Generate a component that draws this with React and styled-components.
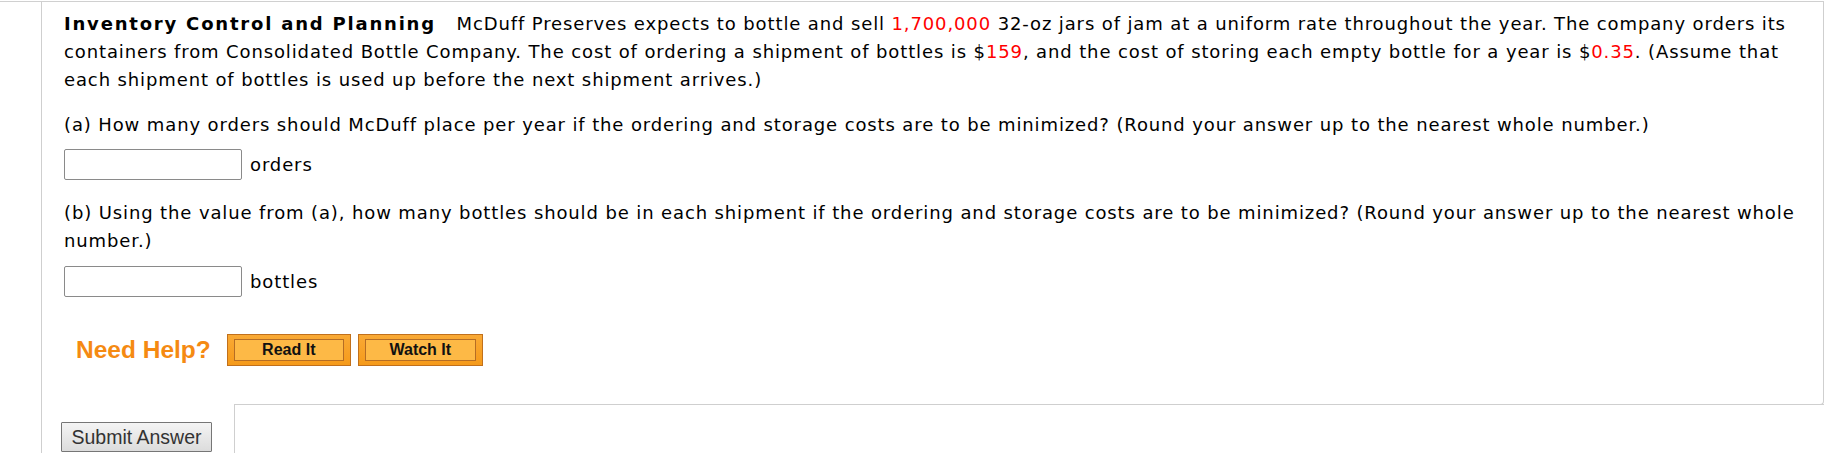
import React from "react";
import styled, { createGlobalStyle } from "styled-components";

const GlobalStyle = createGlobalStyle`
  html, body {
    margin: 0;
    padding: 0;
    background: #fff;
  }
  body {
    font-family: "DejaVu Sans", Verdana, sans-serif;
    color: #000;
  }
`;

const Page = styled.div`
  width: 1824px;
  margin-top: 1px;
  border-top: 1px solid #d0d0d0;
  height: 451px;
  overflow: hidden;
`;

const Column = styled.div`
  margin-left: 41px;
  border-left: 1px solid #cfcfcf;
  height: 100%;
  display: flex;
  flex-direction: column;
`;

const Question = styled.div`
  border-right: 1px solid #cfcfcf;
  border-bottom: 1px solid #cfcfcf;
  border-bottom-right-radius: 4px;
  padding: 8px 18px 38px 22px;
  font-size: 18px;
  line-height: 28px;
  letter-spacing: 0.88px;
`;

const Para = styled.p`
  margin: ${(p) => p.$top || 0}px 0 0;
`;

const Title = styled.b`
  margin-right: 14px;
  letter-spacing: 1.8px;
`;

const Red = styled.span`
  color: #f00;
`;

const AnswerRow = styled.div`
  display: flex;
  align-items: center;
  gap: 8px;
  margin-top: ${(p) => p.$top}px;
`;

const AnswerBox = styled.input`
  box-sizing: border-box;
  width: 178px;
  height: 31px;
  margin: 0;
  border: 1px solid #8a8a8a;
  border-radius: 2px;
  background: #fff;
`;

const HelpRow = styled.div`
  display: flex;
  align-items: center;
  margin-top: 37px;
  padding-left: 12px;
  letter-spacing: 0;
`;

const HelpLabel = styled.span`
  font-family: "Liberation Sans", Arial, sans-serif;
  font-weight: bold;
  font-size: 24.5px;
  line-height: 32px;
  color: #f58a12;
  margin-right: 16px;
`;

const HelpButton = styled.button`
  box-sizing: border-box;
  width: ${(p) => p.$w}px;
  height: 32px;
  margin: 0 7px 0 0;
  padding: 4px 6px;
  border: 1px solid #c1701c;
  background: linear-gradient(#f9a935, #f59a1a);
  display: flex;
  cursor: pointer;
`;

const HelpInner = styled.span`
  flex: 1;
  border: 1px solid #b56d24;
  background: #fdb946;
  font-family: "Liberation Sans", Arial, sans-serif;
  font-weight: bold;
  font-size: 16px;
  line-height: 20px;
  color: #111;
  text-align: center;
`;

const Footer = styled.div`
  display: flex;
  flex: 1;
  margin-top: -1px;
`;

const SubmitCell = styled.div`
  width: 192px;
  background: #fff;
  position: relative;
  padding: 18px 0 0 19px;
  box-sizing: border-box;
`;

const SubmitButton = styled.button`
  box-sizing: border-box;
  width: 151px;
  height: 30px;
  padding: 0;
  border: 1px solid #767676;
  border-radius: 1px;
  background: linear-gradient(#f4f4f4, #dcdcdc);
  font-family: "Liberation Sans", Arial, sans-serif;
  font-size: 19.5px;
  color: #333;
`;

const Notes = styled.div`
  flex: 1;
  border-top: 1px solid #cfcfcf;
  border-left: 1px solid #cfcfcf;
`;

export default function App() {
  return (
    <>
      <GlobalStyle />
      <Page>
        <Column>
          <Question>
            <Para>
              <Title>Inventory Control and Planning</Title> McDuff Preserves
              expects to bottle and sell <Red>1,700,000</Red> 32-oz jars of jam
              at a uniform rate throughout the year. The company orders its
              containers from Consolidated Bottle Company. The cost of ordering
              a shipment of bottles is $<Red>159</Red>, and the cost of storing
              each empty bottle for a year is $<Red>0.35</Red>. (Assume that
              each shipment of bottles is used up before the next shipment
              arrives.)
            </Para>
            <Para $top={17}>
              (a) How many orders should McDuff place per year if the ordering
              and storage costs are to be minimized? (Round your answer up to
              the nearest whole number.)
            </Para>
            <AnswerRow $top={10}>
              <AnswerBox type="text" />
              <span>orders</span>
            </AnswerRow>
            <Para $top={19}>
              (b) Using the value from (a), how many bottles should be in each
              shipment if the ordering and storage costs are to be minimized?
              (Round your answer up to the nearest whole number.)
            </Para>
            <AnswerRow $top={11}>
              <AnswerBox type="text" />
              <span>bottles</span>
            </AnswerRow>
            <HelpRow>
              <HelpLabel>Need Help?</HelpLabel>
              <HelpButton $w={124}>
                <HelpInner>Read It</HelpInner>
              </HelpButton>
              <HelpButton $w={125}>
                <HelpInner>Watch It</HelpInner>
              </HelpButton>
            </HelpRow>
          </Question>
          <Footer>
            <SubmitCell>
              <SubmitButton>Submit Answer</SubmitButton>
            </SubmitCell>
            <Notes />
          </Footer>
        </Column>
      </Page>
    </>
  );
}
